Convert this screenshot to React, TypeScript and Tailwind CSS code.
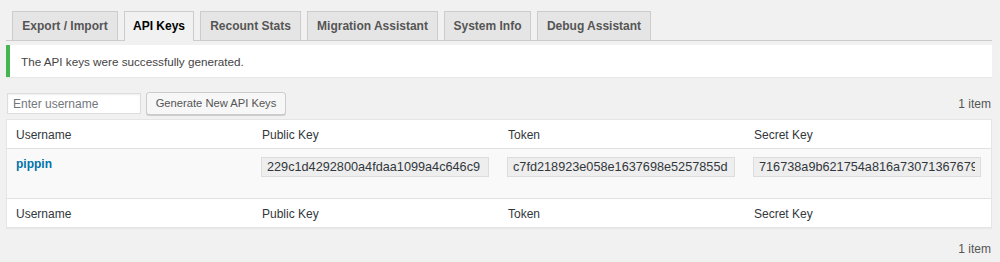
const tabs = [
  { label: "Export / Import", width: "w-[106px]" },
  { label: "API Keys", width: "w-[70px]", active: true },
  { label: "Recount Stats", width: "w-[101px]" },
  { label: "Migration Assistant", width: "w-[131px]" },
  { label: "System Info", width: "w-[87px]" },
  { label: "Debug Assistant", width: "w-[114px]" },
];

const keys = [
  "229c1d4292800a4fdaa1099a4c646c9",
  "c7fd218923e058e1637698e5257855d",
  "716738a9b621754a816a730713676794",
];

export default function App() {
  return (
    <div className="h-[262px] w-full overflow-hidden bg-[#f1f1f1] pl-[6px] pr-[8px] font-['Liberation_Sans',Arial,sans-serif] text-[#32373c]">
      {/* tabs */}
      <nav className="flex h-[41px] items-end border-b border-[#ccc] pt-[11px]">
        {tabs.map((tab) => (
          <div
            key={tab.label}
            className={
              tab.active
                ? `ml-[6px] -mb-px flex h-[30px] ${tab.width} items-center justify-center border border-b-0 border-[#ccc] bg-[#f1f1f1] pb-px text-[12px] font-bold text-[#000]`
                : `ml-[6px] flex h-[29px] ${tab.width} items-center justify-center border border-b-0 border-[#ccc] bg-[#e5e5e5] text-[12px] font-bold text-[#555]`
            }
          >
            {tab.label}
          </div>
        ))}
      </nav>

      {/* notice */}
      <div className="mt-[4px] flex h-[32px] items-center border-l-4 border-[#46b450] bg-white pl-[11px] pt-[2px] text-[11.7px] text-[#444] shadow-[0_1px_1px_rgba(0,0,0,0.04)]">
        The API keys were successfully generated.
      </div>

      {/* controls */}
      <div className="mt-[15px] flex h-[23px] items-center">
        <input
          placeholder="Enter username"
          className="ml-px h-[21px] w-[134px] border border-[#ddd] bg-white px-[5px] text-[12px] text-[#32373c] shadow-[inset_0_1px_2px_rgba(0,0,0,0.07)] outline-none placeholder:text-[#72777c]"
        />
        <button className="ml-[5px] h-[23px] w-[140px] rounded-[3px] border border-[#ccc] bg-[#f7f7f7] text-[11.2px] text-[#555] shadow-[0_1px_0_#ccc]">
          Generate New API Keys
        </button>
        <span className="ml-auto pr-[1px] text-[12px] text-[#555]">1 item</span>
      </div>

      {/* table */}
      <div className="mt-[4px] border border-[#e5e5e5] bg-white text-[12px] shadow-[0_1px_1px_rgba(0,0,0,0.04)]">
        <div className="grid h-[29px] grid-cols-4 items-center border-b border-[#e1e1e1] pt-[2px]">
          <div className="px-[9px]">Username</div>
          <div className="px-[9px]">Public Key</div>
          <div className="px-[9px]">Token</div>
          <div className="px-[9px]">Secret Key</div>
        </div>
        <div className="grid h-[49px] grid-cols-4 items-start bg-[#f9f9f9] pt-[8px]">
          <div className="px-[9px] text-[12px] leading-[14px] font-bold text-[#0073aa]">pippin</div>
          {keys.map((k) => (
            <div key={k} className="pl-[8px] pr-[10px]">
              <input
                readOnly
                value={k}
                className="h-[20px] w-full border border-[#ddd] bg-[#eee] px-[5px] text-[12.7px] text-[#32373c] outline-none"
              />
            </div>
          ))}
        </div>
        <div className="grid h-[29px] grid-cols-4 items-center border-t border-[#e1e1e1] pt-px">
          <div className="px-[9px]">Username</div>
          <div className="px-[9px]">Public Key</div>
          <div className="px-[9px]">Token</div>
          <div className="px-[9px]">Secret Key</div>
        </div>
      </div>

      <div className="mt-[12px] pr-[1px] text-right text-[12px] text-[#555]">1 item</div>
    </div>
  );
}
